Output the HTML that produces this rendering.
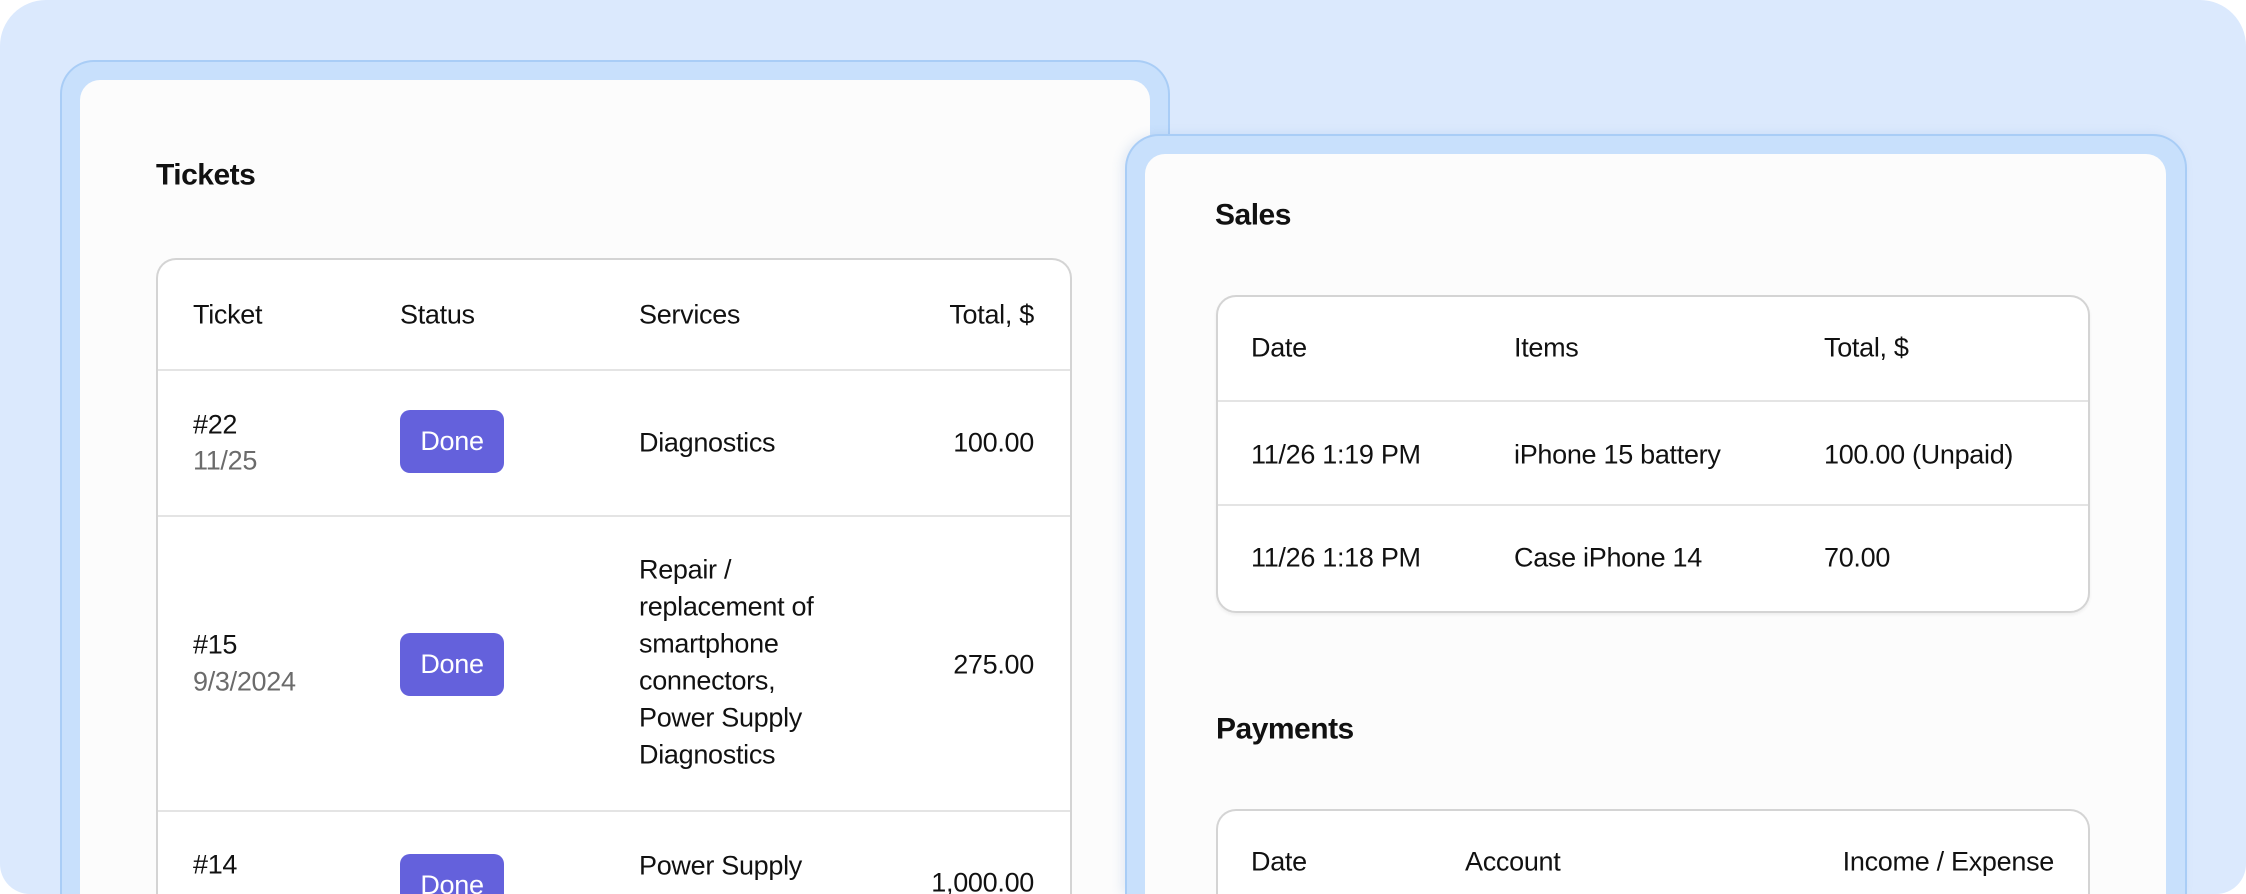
<!DOCTYPE html>
<html><head><meta charset="utf-8"><style>
*{margin:0;padding:0;box-sizing:border-box}
html,body{width:2246px;height:894px;overflow:hidden}
body{background:#fff;position:relative;font-family:"Liberation Sans",sans-serif;color:#111;}
#w{position:absolute;left:0;top:0;width:2246px;height:894px;overflow:hidden}
.bg{position:absolute;left:0;top:0;width:2246px;height:894px;background:#dbe9fd;border-radius:46px 46px 30px 30px;}
.frame{position:absolute;background:#c8e0fc;border:2px solid #a9cdf6;border-bottom:none;border-radius:34px 34px 0 0;}
.card{position:absolute;background:#fcfcfc;border-radius:20px 20px 0 0;}
.t{position:absolute;white-space:nowrap;font-size:27px;line-height:37px;transform:translateY(-50%);letter-spacing:-0.3px}
.h{font-size:30px;font-weight:bold;letter-spacing:-0.5px}
.tbl{position:absolute;border:2px solid #d4d4d4;border-bottom:none;border-radius:20px 20px 0 0;background:#fff;}
.line{position:absolute;height:2px;background:#e4e4e4}
.gray{color:#6b6b6b}
.badge{position:absolute;width:104px;height:63px;background:#6461dc;border-radius:10px;color:#fff;font-size:27px;line-height:63px;text-align:center;letter-spacing:-0.3px}
.r{text-align:right;transform:translate(-100%,-50%)}
</style></head><body><div id="w">
<div class="bg"></div>
<div class="frame" style="left:60px;top:60px;width:1110px;height:834px"></div>
<div class="card" style="left:80px;top:80px;width:1070px;height:814px"></div>
<div class="t h" style="left:156px;top:175px">Tickets</div>
<div class="tbl" style="left:156px;top:258px;width:916px;height:636px"></div>
<div class="line" style="left:158px;top:369px;width:912px"></div>
<div class="line" style="left:158px;top:515px;width:912px"></div>
<div class="line" style="left:158px;top:810px;width:912px"></div>
<div class="t" style="left:193px;top:315px">Ticket</div>
<div class="t" style="left:400px;top:315px">Status</div>
<div class="t" style="left:639px;top:315px">Services</div>
<div class="t r" style="left:1034px;top:315px">Total, $</div>
<div class="t" style="left:193px;top:425px">#22</div>
<div class="t gray" style="left:193px;top:461px">11/25</div>
<div class="badge" style="left:400px;top:410px">Done</div>
<div class="t" style="left:639px;top:443px">Diagnostics</div>
<div class="t r" style="left:1034px;top:443px">100.00</div>
<div class="t" style="left:193px;top:645px">#15</div>
<div class="t gray" style="left:193px;top:682px">9/3/2024</div>
<div class="badge" style="left:400px;top:633px">Done</div>
<div class="t" style="left:639px;top:570px">Repair /</div>
<div class="t" style="left:639px;top:607px">replacement of</div>
<div class="t" style="left:639px;top:644px">smartphone</div>
<div class="t" style="left:639px;top:681px">connectors,</div>
<div class="t" style="left:639px;top:718px">Power Supply</div>
<div class="t" style="left:639px;top:755px">Diagnostics</div>
<div class="t r" style="left:1034px;top:665px">275.00</div>
<div class="t" style="left:193px;top:865px">#14</div>
<div class="badge" style="left:400px;top:854px">Done</div>
<div class="t" style="left:639px;top:866px">Power Supply</div>
<div class="t r" style="left:1034px;top:883px">1,000.00</div>

<div class="frame" style="left:1125px;top:134px;width:1062px;height:760px;box-shadow:-4px 0 10px rgba(100,140,200,.15)"></div>
<div class="card" style="left:1145px;top:154px;width:1021px;height:740px"></div>
<div class="t h" style="left:1215px;top:215px">Sales</div>
<div class="tbl" style="left:1216px;top:295px;width:874px;height:318px;border-bottom:2px solid #d4d4d4;border-radius:20px;box-shadow:0 2px 3px rgba(0,0,0,.06)"></div>
<div class="line" style="left:1218px;top:400px;width:870px"></div>
<div class="line" style="left:1218px;top:504px;width:870px"></div>
<div class="t" style="left:1251px;top:348px">Date</div>
<div class="t" style="left:1514px;top:348px">Items</div>
<div class="t" style="left:1824px;top:348px">Total, $</div>
<div class="t" style="left:1251px;top:455px">11/26 1:19 PM</div>
<div class="t" style="left:1514px;top:455px">iPhone 15 battery</div>
<div class="t" style="left:1824px;top:455px">100.00 (Unpaid)</div>
<div class="t" style="left:1251px;top:558px">11/26 1:18 PM</div>
<div class="t" style="left:1514px;top:558px">Case iPhone 14</div>
<div class="t" style="left:1824px;top:558px">70.00</div>
<div class="t h" style="left:1216px;top:729px">Payments</div>
<div class="tbl" style="left:1216px;top:809px;width:874px;height:85px"></div>
<div class="t" style="left:1251px;top:862px">Date</div>
<div class="t" style="left:1465px;top:862px">Account</div>
<div class="t r" style="left:2054px;top:862px">Income / Expense</div>
</div></body></html>
